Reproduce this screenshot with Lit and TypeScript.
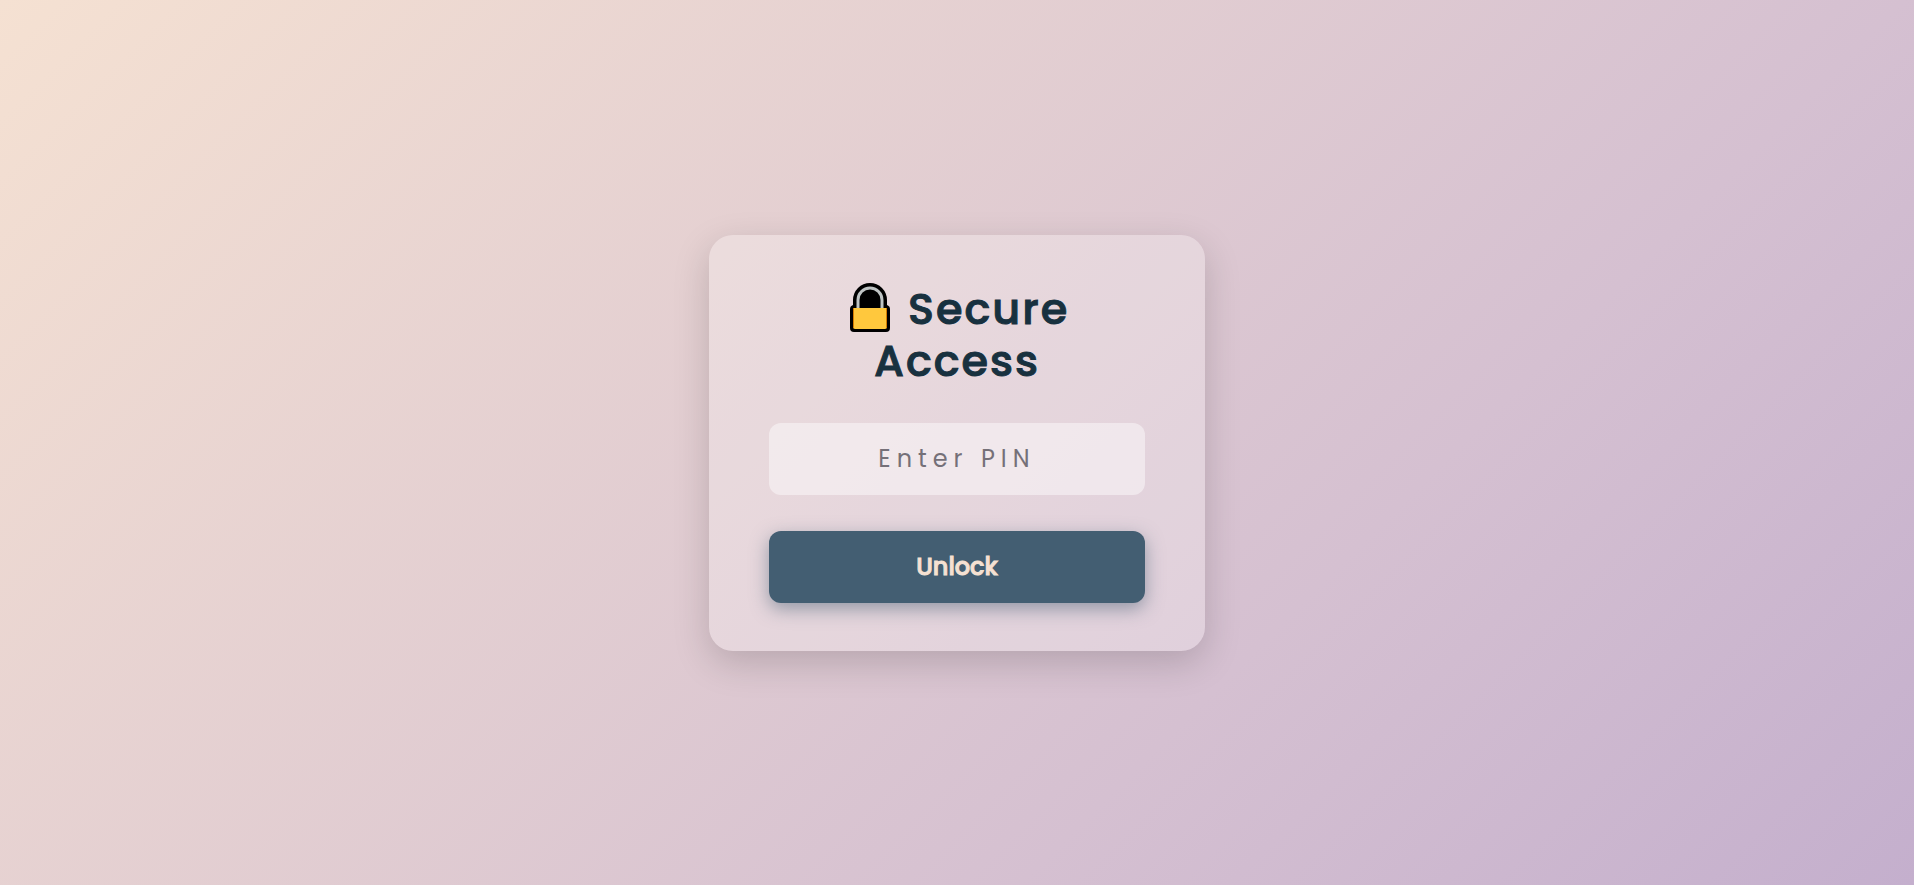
import { LitElement, html, css } from "lit";
import { customElement, state } from "lit/decorators.js";

@customElement("app-root")
export class AppRoot extends LitElement {
  static styles = css`
    :host {
      display: grid;
      place-items: center;
      box-sizing: border-box;
      min-height: 100vh;
      padding: 24px;
      background: linear-gradient(135deg, #f5e1d2 0%, #d5c0d1 68%, #c4afcd 100%);
      font-family: Poppins, Inter, sans-serif;
    }
    .card {
      box-sizing: border-box;
      width: 100%;
      max-width: 496px;
      padding: 48px 60px;
      border-radius: 24px;
      background: rgba(255, 255, 255, 0.25);
      box-shadow: 0 12px 36px rgba(0, 0, 0, 0.17);
      text-align: center;
    }
    .title {
      margin: 0 0 36px;
      color: #18313f;
      font-size: 43px;
      font-weight: 500;
      line-height: 52px;
      letter-spacing: 2px;
      -webkit-text-stroke: 1px #18313f;
    }
    .lock {
      width: 40px;
      height: 49px;
      margin: 0 5px;
      vertical-align: -8px;
    }
    .form {
      display: grid;
      gap: 36px;
    }
    .pin,
    .unlock {
      box-sizing: border-box;
      width: 100%;
      height: 72px;
      margin: 0;
      border: 0;
      border-radius: 12px;
      font-family: inherit;
      font-size: 24px;
      text-align: center;
    }
    .pin {
      padding: 0 18px;
      outline: none;
      background: rgba(255, 255, 255, 0.45);
      color: #18313f;
      letter-spacing: 6px;
    }
    .pin::placeholder {
      color: #757078;
      opacity: 1;
    }
    .unlock {
      background: #435e72;
      color: #f5e1d2;
      font-weight: 500;
      -webkit-text-stroke: 1px #f5e1d2;
      box-shadow: 0 6px 18px rgba(67, 94, 114, 0.5);
      cursor: pointer;
    }
  `;

  @state() private pin = "";

  private onInput(e: Event) {
    this.pin = (e.target as HTMLInputElement).value;
  }

  private onSubmit(e: Event) {
    e.preventDefault();
  }

  render() {
    return html`
      <main class="card">
        <h2 class="title">
          <svg class="lock" viewBox="0 0 40 49" aria-hidden="true">
            <path d="M3 22V17a17 17 0 0 1 34 0v5q3 1 3 4v19q0 4-4 4H4q-4 0-4-4V26q0-3 3-4z" fill="#000" />
            <path d="M8 26V17a12 12 0 0 1 24 0v9" fill="none" stroke="#bfc4c4" stroke-width="3" />
            <path d="M3 25h34v19q0 2-2 2H5q-2 0-2-2z" fill="#ffc83d" />
            <path d="M3 25h1v20q-1 0-1-1zM36 25h1v19q0 1-1 1z" fill="#d67d00" />
          </svg>
          Secure Access
        </h2>
        <form class="form" @submit=${this.onSubmit}>
          <input
            class="pin"
            type="password"
            aria-label="Enter PIN"
            placeholder="Enter PIN"
            .value=${this.pin}
            @input=${this.onInput}
          />
          <button class="unlock" type="submit">Unlock</button>
        </form>
      </main>
    `;
  }
}
